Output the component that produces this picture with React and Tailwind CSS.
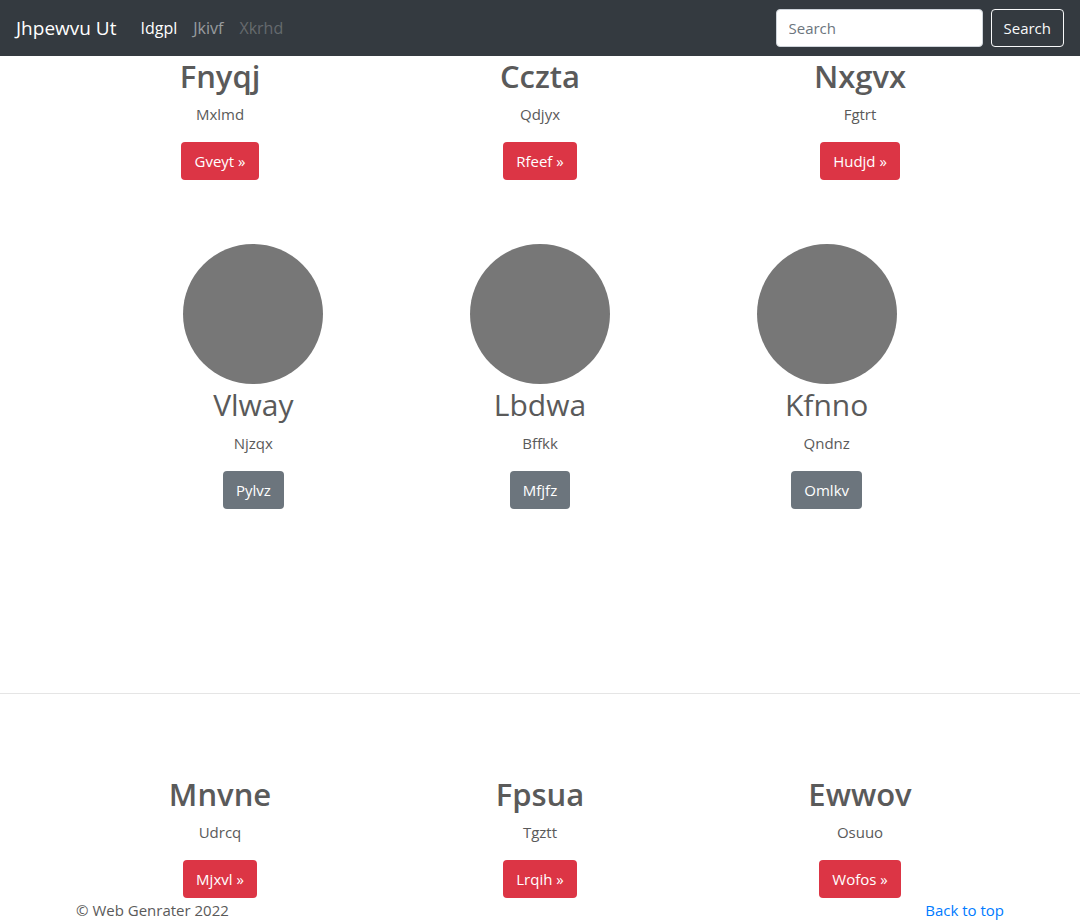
const topFeatures = [
  { title: "Fnyqj", text: "Mxlmd", action: "Gveyt" },
  { title: "Cczta", text: "Qdjyx", action: "Rfeef" },
  { title: "Nxgvx", text: "Fgtrt", action: "Hudjd" },
];

const profiles = [
  { title: "Vlway", text: "Njzqx", action: "Pylvz" },
  { title: "Lbdwa", text: "Bffkk", action: "Mfjfz" },
  { title: "Kfnno", text: "Qndnz", action: "Omlkv" },
];

const bottomFeatures = [
  { title: "Mnvne", text: "Udrcq", action: "Mjxvl" },
  { title: "Fpsua", text: "Tgztt", action: "Lrqih" },
  { title: "Ewwov", text: "Osuuo", action: "Wofos" },
];

function Navbar() {
  return (
    <nav className="flex h-14 items-center bg-[#343a40] px-4">
      <a href="#" className="mr-4 text-[19px] leading-8 text-white">Jhpewvu Ut</a>
      <ul className="flex flex-1 text-base leading-6">
        <li><a href="#" className="block px-2 text-white">Idgpl</a></li>
        <li><a href="#" className="block px-2 text-white/50">Jkivf</a></li>
        <li><a href="#" aria-disabled="true" className="block px-2 text-white/25">Xkrhd</a></li>
      </ul>
      <form className="flex gap-2" onSubmit={(e) => e.preventDefault()}>
        <input
          type="search"
          aria-label="Search"
          placeholder="Search"
          className="h-[38px] w-[207px] rounded border border-[#ced4da] bg-white px-3 text-[#495057] placeholder:text-[#6c757d]"
        />
        <button type="submit" className="h-[38px] rounded border border-[#f8f9fa] px-3 text-[#f8f9fa]">
          Search
        </button>
      </form>
    </nav>
  );
}

function FeatureRow({ items }) {
  return (
    <section className="mx-auto grid max-w-[960px] grid-cols-3 text-center">
      {items.map((item) => (
        <div key={item.title} className="flex flex-col items-center">
          <h2 className="mb-1.5 text-[31px] leading-10 font-semibold">{item.title}</h2>
          <p className="mb-4 leading-6">{item.text}</p>
          <a href="#" className="rounded bg-[#dc3545] px-[13px] py-[7px] leading-6 text-white">
            {item.action} »
          </a>
        </div>
      ))}
    </section>
  );
}

function ProfileRow({ items }) {
  return (
    <section className="mx-auto grid max-w-[860px] grid-cols-3 text-center">
      {items.map((item) => (
        <div key={item.title} className="flex flex-col items-center">
          <div className="mb-px size-[140px] rounded-full bg-[#777777]" />
          <h2 className="mb-1.5 text-[30px] leading-10">{item.title}</h2>
          <p className="mb-4 leading-6">{item.text}</p>
          <a href="#" className="rounded bg-[#6c757d] px-[13px] py-[7px] leading-6 text-white">
            {item.action}
          </a>
        </div>
      ))}
    </section>
  );
}

export default function App() {
  return (
    <div className="bg-white font-['Open_Sans','Noto_Sans',sans-serif] text-[15px] text-[#5a5a5a]">
      <Navbar />
      <main>
        <FeatureRow items={topFeatures} />
        <div className="mt-16">
          <ProfileRow items={profiles} />
        </div>
        <hr className="mt-[184px] mb-20 border-t border-black/10" />
        <FeatureRow items={bottomFeatures} />
      </main>
      <footer className="mx-auto flex max-w-[960px] justify-between px-4 leading-6">
        <p>© Web Genrater 2022</p>
        <a href="#" className="text-[#007bff]">Back to top</a>
      </footer>
    </div>
  );
}
